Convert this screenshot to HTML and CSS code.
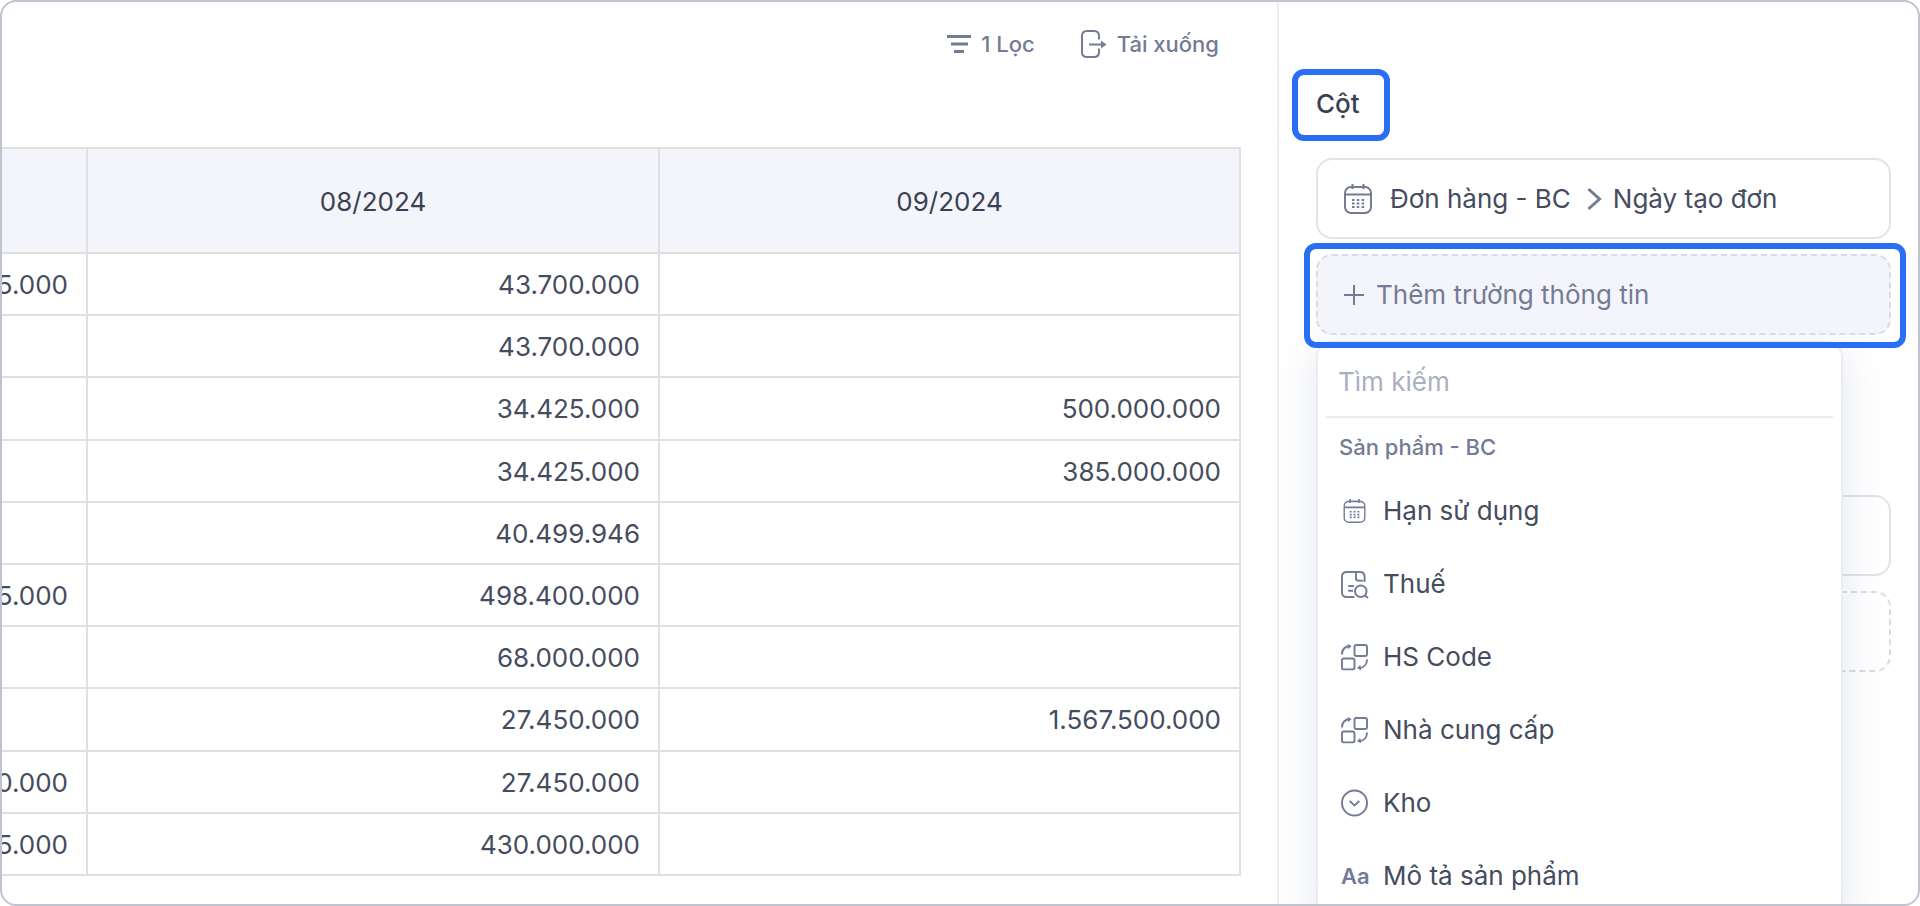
FILE: index.html
```html
<!DOCTYPE html>
<html lang="vi">
<head>
<meta charset="utf-8">
<meta name="viewport" content="width=device-width, initial-scale=1">
<title>Báo cáo</title>
<link rel="stylesheet" href="styles.css">
</head>
<body>
<svg class="sprite" aria-hidden="true">
  <symbol id="i-calendar" viewBox="0 0 28 30">
    <rect x="1" y="3" width="26" height="26" rx="6"/>
    <path d="M1 10.500h26M8.500 0v5M19.500 0v5"/>
    <path class="dots" d="M8 16h2.500M12.800 16h2.500M17.600 16h2.500M8 19.500h2.500M12.800 19.500h2.500M17.600 19.500h2.500M8 23h2.500M12.800 23h2.500M17.600 23h2.500"/>
  </symbol>
  <symbol id="i-swap" viewBox="0 0 28 28">
    <rect x="14" y="1.500" width="13" height="11.500" rx="2"/>
    <rect x="1" y="15.500" width="13" height="11.500" rx="2"/>
    <path d="M1 11.500C1 6.500 4 3 9.500 2.600M27 16.500c0 5-3 8.700-8.500 9.100"/>
    <path class="solid" d="M7 .500l4 2.200-3.500 3.300zM21 28l-4.500-2.600 3.500-3z"/>
  </symbol>
</svg>
<div class="app">
  <main class="report">
    <div class="toolbar">
      <button type="button" class="tool">
        <svg class="icon-tool" viewBox="0 0 24 28"><path class="thick" d="M0 6.500h24M4 14h17M7 21.500h10"/></svg>
        1 Lọc
      </button>
      <button type="button" class="tool">
        <svg class="icon-tool wide" viewBox="0 0 26 28"><path d="M18 9.500V6c0-3-2-5-5-5H6C3 1 1 3 1 6v16c0 3 2 5 5 5h7c3 0 5-2 5-5v-3.500M8 14.500h13"/><path class="solid" d="M20 10.500l5.500 4-5.500 4z"/></svg>
        Tải xuống
      </button>
    </div>
    <div class="table-view">
      <table class="pivot">
        <colgroup><col class="col-first"><col class="col-mid"><col></colgroup>
        <thead><tr><th></th><th scope="col">08/2024</th><th scope="col">09/2024</th></tr></thead>
        <tbody>
          <tr><td>5.000</td><td>43.700.000</td><td></td></tr>
          <tr><td></td><td>43.700.000</td><td></td></tr>
          <tr><td></td><td>34.425.000</td><td>500.000.000</td></tr>
          <tr><td></td><td>34.425.000</td><td>385.000.000</td></tr>
          <tr><td></td><td>40.499.946</td><td></td></tr>
          <tr><td>5.000</td><td>498.400.000</td><td></td></tr>
          <tr><td></td><td>68.000.000</td><td></td></tr>
          <tr><td></td><td>27.450.000</td><td>1.567.500.000</td></tr>
          <tr><td>0.000</td><td>27.450.000</td><td></td></tr>
          <tr><td>5.000</td><td>430.000.000</td><td></td></tr>
        </tbody>
      </table>
    </div>
  </main>
  <aside class="panel">
    <h2 class="panel-title highlight">Cột</h2>
    <section class="fields">
      <button type="button" class="field">
        <svg class="icon-field" viewBox="0 0 28 30"><use href="#i-calendar"/></svg>
        <span>Đơn hàng - BC</span>
        <svg class="icon-chevron" viewBox="0 0 14 22"><path class="chevron" d="M1.500 1l11 10-11 10"/></svg>
        <span>Ngày tạo đơn</span>
      </button>
      <div class="picker highlight">
        <button type="button" class="field field-add">
          <svg class="icon-plus" viewBox="0 0 20 20"><path class="plus" d="M10 0v20M0 10h20"/></svg>
          Thêm trường thông tin
        </button>
        <div class="menu">
          <input class="search" type="text" placeholder="Tìm kiếm" aria-label="Tìm kiếm">
          <h3 class="group">Sản phẩm - BC</h3>
          <ul class="options">
            <li><button type="button" class="option"><svg class="icon-option small" viewBox="0 0 28 30"><use href="#i-calendar"/></svg>Hạn sử dụng</button></li>
            <li><button type="button" class="option"><svg class="icon-option" viewBox="0 0 28 28"><path d="M24.500 12V6.500c0-3-2-5-5-5H6c-3 0-5 2-5 5v16c0 3 2 5 5 5h8M15.500 1.500V8c0 1.700 1 2.500 2.500 2.500h5M7.500 16h6M7.500 21h5"/><circle cx="20.500" cy="21.500" r="6"/><path d="M25 26l3 2.500"/></svg>Thuế</button></li>
            <li><button type="button" class="option"><svg class="icon-option" viewBox="0 0 28 28"><use href="#i-swap"/></svg>HS Code</button></li>
            <li><button type="button" class="option"><svg class="icon-option" viewBox="0 0 28 28"><use href="#i-swap"/></svg>Nhà cung cấp</button></li>
            <li><button type="button" class="option"><svg class="icon-option" viewBox="0 0 28 28"><circle cx="14" cy="14" r="13"/><path d="M9 12l5 4.500 5-4.500"/></svg>Kho</button></li>
            <li><button type="button" class="option"><span class="icon-text">Aa</span>Mô tả sản phẩm</button></li>
          </ul>
        </div>
      </div>
    </section>
    <section class="fields">
      <button type="button" class="field" aria-label="Trường"></button>
      <button type="button" class="field field-empty" aria-label="Thêm trường"></button>
    </section>
  </aside>
</div>
</body>
</html>
```
FILE: styles.css
```css
* { box-sizing: border-box; }

body {
  margin: 0;
  background: #fff;
  color: #454c5e;
  font: 400 26px/32px Inter, "Liberation Sans", sans-serif;
}

button, input { font: inherit; color: inherit; }
button { cursor: pointer; text-align: left; white-space: nowrap; }
h2, h3, ul { margin: 0; padding: 0; }
ul { list-style: none; }

svg { flex: none; fill: none; stroke: #737b96; stroke-width: 2; overflow: visible; }
.sprite { position: absolute; width: 0; height: 0; }
.solid { fill: #737b96; stroke: none; }
.thick { stroke-width: 3; }
.chevron { stroke-width: 3; }

.app {
  display: grid;
  grid-template-columns: minmax(0, 1fr) 641px;
  min-height: 100vh;
  overflow: hidden;
  border: 2px solid #c0c4d0;
  border-radius: 16px;
}

/* Report */
.report {
  display: grid;
  grid-template-rows: auto 1fr;
  gap: 81px;
  padding: 20px 36px 28px 0;
  min-width: 0;
}

.toolbar { display: flex; justify-content: flex-end; gap: 46px; padding-right: 22px; }

.tool {
  display: flex;
  align-items: center;
  gap: 10px;
  height: 44px;
  padding: 0;
  border: 0;
  background: none;
  color: #737b96;
  font-size: 22px;
  font-weight: 500;
}
.icon-tool { width: 24px; height: 28px; }
.icon-tool.wide { width: 26px; }

.table-view { display: flex; justify-content: flex-end; overflow: hidden; }

.pivot {
  flex: none;
  width: calc(100% + 60px);
  table-layout: fixed;
  border-collapse: collapse;
}
.col-first { width: 144px; }
.col-mid { width: 572px; }
.pivot th, .pivot td { padding: 2px 18px 0; border: 2px solid #e0e0e0; }
.pivot th { height: 105px; background: #f4f5fa; color: #3a4154; font-weight: 400; }
.pivot td { text-align: right; }

/* Settings panel */
.panel { padding: 67px 27px 0 13px; border-left: 2px solid #ebecf3; }

.highlight { position: relative; }
.highlight::after {
  content: "";
  position: absolute;
  inset: 0;
  border: 6px solid #2a6ff3;
  border-radius: 12px;
  pointer-events: none;
}

.panel-title {
  width: max-content;
  padding: 19px 30px 21px 24px;
  color: #3a4154;
  font-size: 26px;
  font-weight: 500;
}

.fields { display: grid; gap: 15px; padding: 17px 0 0 24px; }
.fields + .fields { padding-top: 160px; }

.field {
  display: flex;
  align-items: center;
  width: 100%;
  height: 81px;
  padding: 0 26px;
  border: 2px solid #e0e3eb;
  border-radius: 16px;
  background: #fff;
}
.icon-field { width: 28px; height: 30px; margin-right: 18px; }
.icon-chevron { width: 14px; height: 22px; margin: 0 12px 0 16px; }

.field-add {
  position: relative;
  z-index: 2;
  gap: 12px;
  border: 2px dashed #d9dbe6;
  background: #f4f5fa;
  color: #737b96;
}
.icon-plus { width: 20px; height: 20px; }
.field-empty { border: 2px dashed #d9dbe6; }

.picker::after { inset: -11px -15px -13px -12px; z-index: 2; }

/* Field menu */
.menu {
  position: absolute;
  z-index: 1;
  top: calc(100% + 6px);
  left: 0;
  right: 48px;
  padding: 5px 8px;
  border: 2px solid #ebecf3;
  border-radius: 16px;
  background: #fff;
  box-shadow: 0 8px 44px rgba(30, 60, 120, 0.12);
}

.search {
  display: block;
  width: 100%;
  height: 70px;
  padding: 0 12px 2px;
  border: 0;
  border-bottom: 2px solid #ebecf3;
  background: none;
  outline: none;
}
.search::placeholder { color: #a9b0c3; opacity: 1; }

.group {
  padding: 13px 13px 11px;
  color: #737b96;
  font-size: 22px;
  font-weight: 500;
}

.option {
  display: flex;
  align-items: center;
  gap: 15px;
  width: 100%;
  height: 73px;
  padding: 0 15px;
  border: 0;
  background: none;
}
.icon-option { width: 27px; height: 28px; }
.icon-option.small { height: 24px; }
.icon-text { width: 27px; color: #737b96; font-size: 22px; font-weight: 600; }
```
